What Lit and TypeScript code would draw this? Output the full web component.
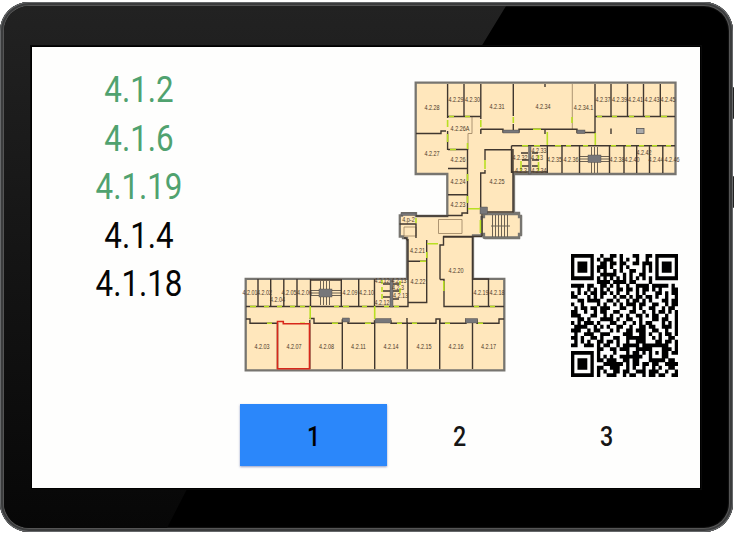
import { LitElement, html, svg, css } from "lit";
import { customElement, property, state } from "lit/decorators.js";
import { classMap } from "lit/directives/class-map.js";

const ROOMS: [string, boolean][] = [
  ["4.1.2", true],
  ["4.1.6", true],
  ["4.1.19", true],
  ["4.1.4", false],
  ["4.1.18", false],
];

const LABELS: [string, number, number][] = [
  ["4.2.28", 432, 108], ["4.2.29", 456, 100], ["4.2.30", 472.5, 100], ["4.2.31", 497, 106.5],
  ["4.2.34", 543, 106.5], ["4.2.34.1", 583.5, 107.5], ["4.2.37", 603, 100], ["4.2.39", 619.5, 100],
  ["4.2.41", 635.5, 100], ["4.2.43", 652, 100], ["4.2.45", 668, 100], ["4.2.26A", 460, 128.5],
  ["4.2.27", 432, 153.5], ["4.2.26", 458, 159.5], ["4.2.24", 458, 182], ["4.2.23", 458, 205],
  ["4.2.25", 497, 182], ["4.2.32", 520, 157.5], ["4.2.33", 539, 150.5], ["4.2.3", 537, 158],
  ["4.2.3", 521, 170.5], ["4.2.34", 539, 170.5],
  ["4.2.35", 554.5, 160], ["4.2.36", 571, 160], ["4.2.38", 617, 160], ["4.2.40", 632, 160],
  ["4.2.42", 644, 153], ["4.2.44", 656, 160], ["4.2.46", 672, 160], ["4.р-2", 408.5, 220],
  ["4.2.21", 417.5, 250.5], ["4.2.22", 418, 282], ["4.2.20", 456, 271], ["4.2.19", 481, 293],
  ["4.2.18", 497, 293], ["4.2.01", 250, 293], ["4.2.02", 264.5, 293], ["4.2.04", 277.5, 300],
  ["4.2.05", 289, 293], ["4.2.06", 304.5, 293], ["4.2.09", 350, 293], ["4.2.10", 366.5, 293],
  ["4.2.12", 382, 302.5], ["4.2.13", 400.5, 295.5], ["4.2.12", 382, 281], ["4.2.13", 399, 280.5],
  ["4.2.3", 398, 288], ["4.2.03", 262, 346.5], ["4.2.07", 294, 346.5],
  ["4.2.08", 326.5, 346.5], ["4.2.11", 358.5, 346.5], ["4.2.14", 391, 346.5], ["4.2.15", 424, 346.5],
  ["4.2.16", 456, 346.5], ["4.2.17", 488.5, 346.5],
];

const OUTLINE =
  "M415.7 82.7H675.5V174H514V213H519V216H521V235H519V238H485L482 235.5H473V278.8H504.3V370.3H245.7V278.8H407V238H403V236.5H399.8V215.5H402V213.2H416V216H447.3V174H415.7Z";

const WALLS = [
  "M447.6 84V118M447.6 131V150M464 84V116.5M480.8 84V119M480.8 129V134M513.3 84V116M513.3 124V130M595 84V133.5M611 84V116.5M627.5 84V116.5M643.5 84V116.5M660.3 84V116.5",
  "M447.6 116.5H480.8M595 116.5H675M416 133.5H441V131H446M480.8 129.3H503V132H519V129.3H577V132.5H595M513.3 129V133M545 130V134M545 84V87",
  "M511.5 145.7H675M547.3 145.7V173M562 145.7V173M579.5 145.7V173M609.5 145.7V173M624 145.7V173M636.7 145.7V173M649.5 145.7V173M662.8 145.7V173M611 128.5V134",
  "M448 149.5H467.5V214M448 168.5H467M448 194.8H467M448 215.5H462V213H467M485 160V149.8H511.5V173M485 170V173H480.7V209M513 149V212H487M482 213V236M512 172H547",
  "M511.5 145.7V172M521 153H528M522 160H529M522 166H529M532 153H538M532 160H539M532 166H539",
  "M399.5 224H416V238M416 216H448M404 238H406L408 241M443 236.5H482M408 239V302.5H426.7V240M408 261.2H426.7M440 279.5V245H443.5V237H472.5V306.5H444V279.5H440",
  "M472.5 279H488.5V306.5M472.5 306.5H504M488.5 306.5V279",
  "M246 306.5H408V279M258 279V306.5M270.7 279V306.5M283.8 279V306.5M297 279V306.5M310.5 279V306.5M341.3 279V306.5M358.7 279V306.5M374.5 279V306.5M311 280H341",
  "M383 284H390M383 291H390M383 297H390M393 284H400M393 291H400M393 299H399",
  "M246 319H250V323.3H277M309.5 318.5H314V323.3H342.3V320H348V323.3H374.5V321H391V323.3H407V318M407 323.3H436V319H440V323.3H466V320H477V323.3H499V319H504",
  "M277.5 323V369M309.8 320V369M342.3 323V369M374.7 322V369M407.2 322V369M439.7 320V369M472.5 322V369",
].join("");

const THIN =
  "M572.3 84V130M472 117V133.5H468V150M438.5 219.5H462V233.5H438.5ZM404 227H416V236H404Z" +
  "M480.8 130V133";

const STAIRS =
  "M591.5 147V173M594.5 147V173M597.5 147V173M580 156.5H609M580 159H609M580 161.5H609" +
  "M320.5 281V305M323.5 281V305M326.5 281V305M329.5 281V305M311 290.5H341M311 293H341M311 295.5H341" +
  "M492.5 215V237M495.5 215V237M498.5 215V237M501.5 215V237M504.5 215V237M507.5 215V237M491 226H510";

const DOORS = [
  "M447.6 120V127M447.6 134V142M449 116.5H454M465 116.5H470M480.8 120V127M513.3 117V123M572 117V123M467.5 143V149M450 149.5H456M533 129.3H541",
  "M547.3 132V145M595.3 133V145M597 116.5H602M612 116.5H617M629 116.5H634M645 116.5H650M661 116.5H667",
  "M522 145.7H528M534 145.7H540M555 145.7H561M566 145.7H571M583 145.7H588M611 145.7H616M626 145.7H631M639 145.7H644M652 145.7H657M666 145.7H671",
  "M485 160V169M467.5 174V181M467.5 196V203M468 208.8H480M480.4 220V233M416 218V223M427 243.8H438M426.8 252V258M420 261.2H426M443.8 281V291",
  "M250 306.5H256M264 306.5H269M277 306.5H282M290 306.5H295M300 306.5H305M334 306.5H339M343 306.5H349M362 306.5H367M384 306.5H389M394 306.5H399M474 306.5H479M490 306.5H495",
  "M310.2 306V319M374.7 306V319M267 323.3H272M300 323.3H305M332 323.3H338M365 323.3H371M397 323.3H402M412 323.3H417M445 323.3H450M478 323.3H483",
  "M521 161V171M538.5 155V159M538.5 162V171M382 280V284M382 287V292M382 294V299M400 281V285M400 288V293",
].join("");

const BLOCKS: [number, number, number, number][] = [
  [503, 130, 16, 3], [577, 130, 8, 3.5], [588, 155, 13, 7.5], [528.5, 146, 2.5, 28],
  [480, 207, 7.5, 7], [319, 289, 13, 8], [390, 279, 3, 28], [342.5, 318, 7, 4],
  [375, 318.5, 16, 4.5], [465.5, 318.5, 12, 4.5], [401, 213, 15, 2.5],
];

const QR = [
  "#######..#..##.#...##..##.#######",
  "#.....#.#.###..#.#..#..#..#.....#",
  "#.###.#..##.##.##..##.###.#.###.#",
  "#.###.#.###.#..#.#....#.#.#.###.#",
  "#.###.#.#.#..#.#..##..#.#.#.###.#",
  "#.....#..#####..#.#..##...#.....#",
  "#######.#.#.#.#.#.#.#.#.#.#######",
  "........####.####.##....#........",
  "####.##..##.#.#..#..####.#####.#.",
  "..#..#.#.#.#..##.##.#.##.#.#...##",
  "#.#.#.##.##.#.#..#..#.#...##.#.##",
  "##...#.#.#...#.##.#.##.##.#..#..#",
  "..##.####..##.#..#.##.#.#...##.##",
  "#..#....#.#..#.#.###.##..##..#.##",
  ".#.##.##.###...##..#.#..##..#.##.",
  "##..#..#.##..##...##..#..#.##.#.#",
  "###...##..#.#..#.#..##.#.##..#..#",
  "..##.#...####.#..##..#...##.##..#",
  "#.#.###.#...##..#..#.#.##...#.#.#",
  ".####..#.#.#..##..#..##.##..###.#",
  "###..#.##...#.#..##.###..##..#..#",
  ".#..###..###....###..##.#..#.##.#",
  "##.#..##.#...##..######..#.#..##.",
  ".#.#.#..##.##.#..#..###...##.##.#",
  "##..###.#.##..#.#####.########..#",
  "........##..##.###..#####...###.#",
  "#######.#....#...#.##.#.#.#.##.##",
  "#.....#.#.#.#..#######..#...##...",
  "#.###.#.##.###..##.##...#####.##.",
  "#.###.#...######.#.##.##.##..####",
  "#.###.#.##..###..#.#..#..#.#..##.",
  "#.....#.#.#..##.##..###.###..#..#",
  "#######.#..###..#.##..#.##.##..##",
];

@customElement("floor-plan")
class FloorPlan extends LitElement {
  static styles = css`
    :host { display: block; }
    svg { display: block; }
    .floor { fill: #ffe7bc; stroke: #777570; stroke-width: 2.3; }
    .wall { fill: none; stroke: #40372f; stroke-width: 1.4; }
    .thin { fill: none; stroke: #98805f; stroke-width: 0.8; }
    .door { fill: none; stroke: #b9df22; stroke-width: 1.6; }
    .block { fill: #77777a; stroke: #4b4743; stroke-width: 0.4; }
    .light { fill: #aaa; stroke: #555; stroke-width: 0.8; }
    .stair { fill: none; stroke: #6d6253; stroke-width: 1; }
    .chosen { fill: none; stroke: #d8281b; stroke-width: 1.6; }
    text { font: 7px "Liberation Sans", Arial, sans-serif; fill: #4c3a2a; text-anchor: middle; }
  `;

  render() {
    return html`<svg width="440" height="300" viewBox="240 75 440 300" overflow="visible">
      <path class="floor" d=${OUTLINE} />
      <path class="floor" d="M484 214H519V217H521V234H519V237.5H484V234H481.5V217H484Z" />
      <path class="thin" d=${THIN} />
      <path class="stair" d=${STAIRS} />
      <path class="wall" d=${WALLS} />
      ${BLOCKS.map(([x, y, w, h]) => svg`<rect class="block" x=${x} y=${y} width=${w} height=${h} />`)}
      <rect class="light" x="636.5" y="128.5" width="7.5" height="5" />
      <path class="door" d=${DOORS} />
      <path class="chosen" d="M277.5 321.5H283.3V323.8H309.5V368.8H277.5Z" />
      ${LABELS.map(([t, x, y]) => svg`<text transform="translate(${x} ${y + 2.4}) scale(.78 1)">${t}</text>`)}
    </svg>`;
  }
}

@customElement("qr-code")
class QrCode extends LitElement {
  static styles = css`
    :host { display: block; }
    svg { display: block; width: 107px; height: 123px; }
  `;

  render() {
    const d = QR.flatMap((row, y) =>
      [...row].map((c, x) => (c === "#" ? `M${x} ${y}h1.03v1.03h-1.03z` : ""))
    ).join("");
    return html`<svg viewBox="0 0 33 33" preserveAspectRatio="none"><path d=${d} /></svg>`;
  }
}

@customElement("app-root")
class AppRoot extends LitElement {
  @property({ type: Array }) floors = [1, 2, 3];
  @state() private floor = 1;

  static styles = css`
    :host { display: block; width: 734px; height: 537px; background: #fff; overflow: hidden;
      font-family: Roboto, "Liberation Sans", sans-serif; }
    .stage { position: relative; box-sizing: border-box; height: 537px; padding-top: 2px; }
    .side-key { position: absolute; right: 0; top: 176px; width: 2px; height: 32px; background: #222; border-radius: 1px; }
    .side-key.small { top: 87px; height: 32px; }
    .tablet { box-sizing: border-box; width: 733px; height: 530px; padding: 45px 33px 43px 32px;
      border-radius: 29px; position: relative; overflow: hidden; background: #000;
      box-shadow: inset 0 0 0 1px #66686a, inset 0 0 0 3px #3b3c3d, inset 0 0 0 4px #555, inset 0 0 1px 5px #111; }
    .shine { position: absolute; left: 4px; top: 4px; width: 725px; height: 522px; border-radius: 25px;
      overflow: hidden; }
    .shine svg { display: block; }
    .screen { position: relative; box-sizing: border-box; width: 668px; height: 441px; background: #fefefd;
      box-shadow: 0 0 0 1px #000, 0 0 0 2px #090909; display: grid; grid-template-columns: 208px 440px; }
    .rooms { list-style: none; margin: 0; padding: 18px 0 0 6px; display: flex; flex-direction: column; }
    .room { height: 48.6px; line-height: 50px; font-size: 36px; text-align: center; color: #050505;
      transform: scaleX(0.87); }
    .room.free { color: #50a26f; }
    .main { display: flex; flex-direction: column; padding-top: 28px; }
    .map { position: relative; height: 329px; }
    .code { position: absolute; left: 330.5px; top: 179px; }
    .floors { display: grid; grid-template-columns: repeat(3, 1fr); height: 62px; }
    .floor { border: 0; padding: 4px 0 0; background: none; font: 500 27px Roboto, sans-serif; color: #161616; }
    .floor span { display: inline-block; transform: scaleX(0.86); }
    .floor.on { background: #2b87fa; color: #000; box-shadow: 0 1px 2px rgba(40, 60, 140, 0.5); }
  `;

  render() {
    return html`<div class="stage">
      <div class="side-key small"></div>
      <div class="side-key"></div>
      <div class="tablet">
        <div class="shine">
          <svg width="725" height="522">
            <defs>
              <linearGradient id="g" x1="0" y1="0" x2="0" y2="1">
                <stop offset="0" stop-color="#222222" />
                <stop offset="0.5" stop-color="#141414" />
                <stop offset="1" stop-color="#070707" />
              </linearGradient>
            </defs>
            <path fill="url(#g)" d="M0 0H502L477 41L184 481L163 522H0Z" />
          </svg>
        </div>
        <div class="screen">
          <ul class="rooms">
            ${ROOMS.map(([name, free]) => html`<li class=${classMap({ room: true, free })}>${name}</li>`)}
          </ul>
          <div class="main">
            <div class="map">
              <floor-plan></floor-plan>
              <qr-code class="code"></qr-code>
            </div>
            <div class="floors">
              ${this.floors.map(
                (n) => html`<button class=${classMap({ floor: true, on: n === this.floor })}
                  @click=${() => (this.floor = n)}><span>${n}</span></button>`
              )}
            </div>
          </div>
        </div>
      </div>
    </div>`;
  }
}
